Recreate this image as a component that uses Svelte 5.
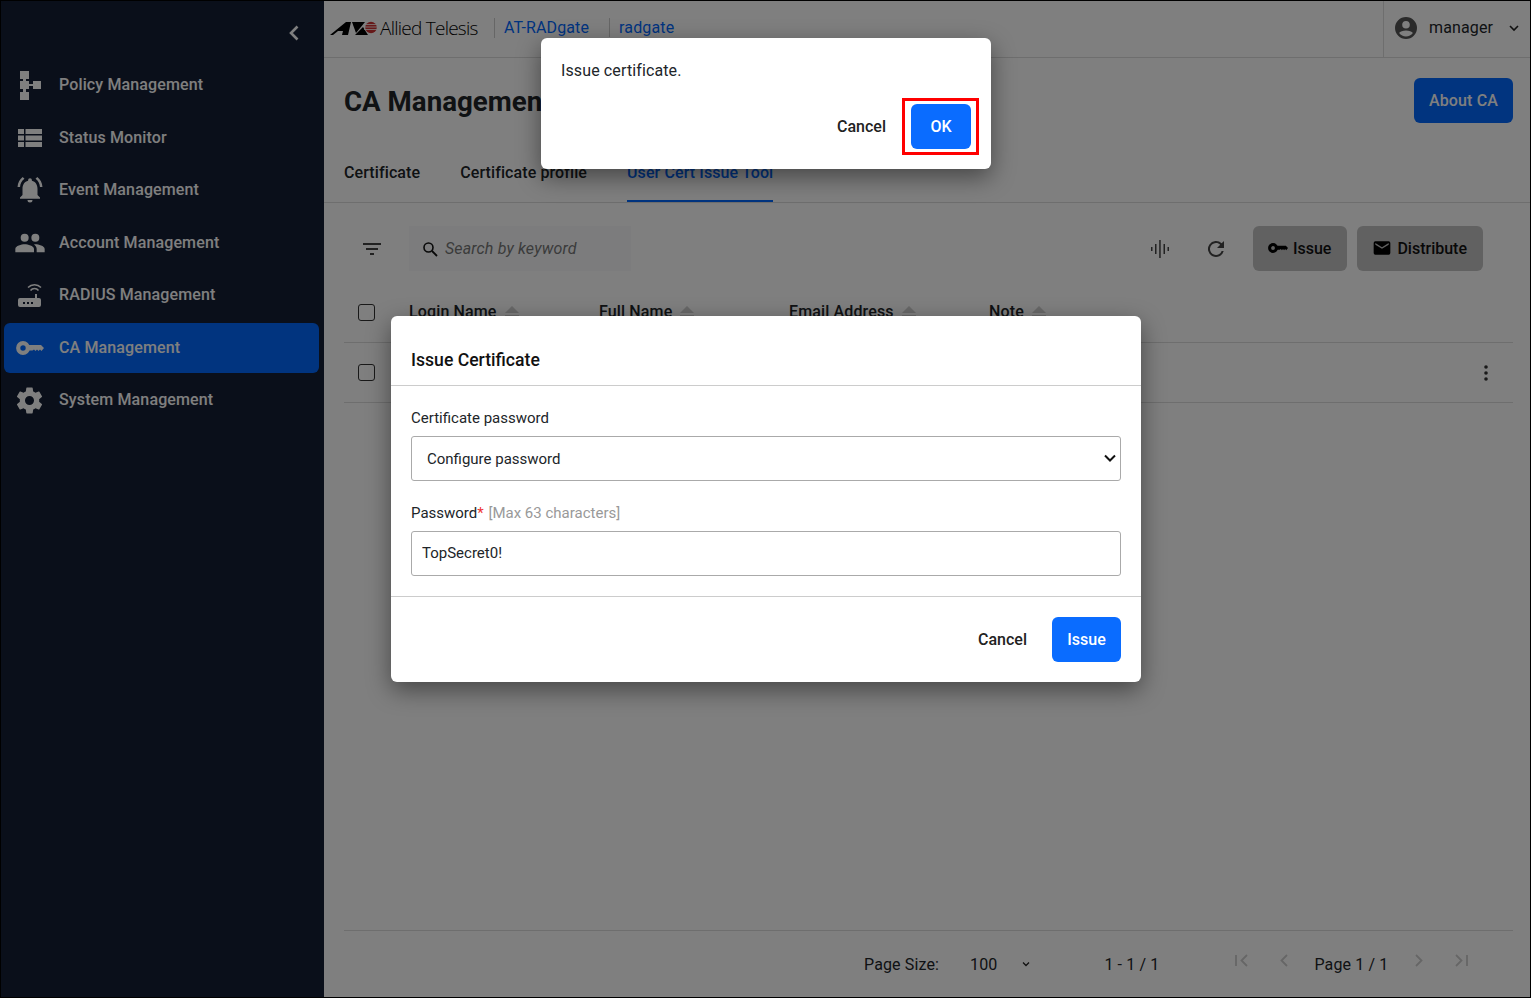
<script>
  const navItems = [
    { label: 'Policy Management', icon: 'policy' },
    { label: 'Status Monitor', icon: 'status' },
    { label: 'Event Management', icon: 'event' },
    { label: 'Account Management', icon: 'account' },
    { label: 'RADIUS Management', icon: 'radius' },
    { label: 'CA Management', icon: 'key', active: true },
    { label: 'System Management', icon: 'gear' }
  ];

  const tabs = ['Certificate', 'Certificate profile', 'User Cert Issue Tool'];
  const columns = ['Login Name', 'Full Name', 'Email Address', 'Note'];

  const keyShaft = 'M12.500 5H25l3 3-2.500 3-1.500-1.500-1.500 1.500-1.500-1.500-1.500 1.500-1.500-1.500-1.500 1H12.500z';
</script>

<div class="app">
  <aside class="sidebar">
    <div class="collapse">
      <svg width="24" height="24" viewBox="0 0 24 24"><path d="M15.500 5.500 9 12l6.500 6.500" fill="none" stroke="#fff" stroke-width="2.600" /></svg>
    </div>
    <nav>
      {#each navItems as item}
        <div class="nav-item" class:active={item.active}>
          <span class="nav-icon">
            {#if item.icon === 'policy'}
              <svg width="24" height="30" viewBox="0 0 24 30" fill="#fff"><path d="M2 1h9v8H8v2h3v3h4v-3h8v8h-8v-3h-4v3H8v3h3v8H2v-8h3v-3H2V11h3V9H2z" /></svg>
            {:else if item.icon === 'status'}
              <svg width="24" height="18" viewBox="0 0 24 18" fill="#fff"><path d="M0 0h6v5H0zM7.500 0H24v5H7.500zM0 6.500h6v5H0zM7.500 6.500H24v5H7.500zM0 13h6v5H0zM7.500 13H24v5H7.500z" /></svg>
            {:else if item.icon === 'event'}
              <svg width="30" height="30" viewBox="0 0 24 24" fill="#fff"><path d="M12 22a2 2 0 0 0 2-2h-4a2 2 0 0 0 2 2zm6-6v-5c0-3.100-1.640-5.640-4.500-6.320V4a1.500 1.500 0 0 0-3 0v.68C7.630 5.360 6 7.890 6 11v5l-2 2v1h16v-1l-2-2zM7.580 3.080 6.150 1.650C3.750 3.480 2.170 6.300 2.030 9.500h2c.15-2.650 1.510-4.970 3.550-6.420zM19.970 9.500h2c-.15-3.200-1.730-6.020-4.120-7.850l-1.420 1.430c2.020 1.450 3.390 3.770 3.540 6.420z" /></svg>
            {:else if item.icon === 'account'}
              <svg width="32" height="32" viewBox="0 0 24 24" fill="#fff"><path d="M16 11a3 3 0 1 0 0-6 3 3 0 0 0 0 6zm-8 0a3 3 0 1 0 0-6 3 3 0 0 0 0 6zm0 2c-2.330 0-7 1.170-7 3.500V19h14v-2.500C15 14.170 10.330 13 8 13zm8 0c-.29 0-.62.02-.97.05 1.160.84 1.970 1.970 1.970 3.450V19h6v-2.500c0-2.330-4.670-3.500-7-3.500z" /></svg>
            {:else if item.icon === 'radius'}
              <svg width="26" height="26" viewBox="0 0 26 26"><path d="M3 16h15v-4h2v4h2a2 2 0 0 1 2 2v5a2 2 0 0 1-2 2H3a2 2 0 0 1-2-2v-5a2 2 0 0 1 2-2z" fill="#fff" /><path d="M6 20h2v2H6zM10 20h2v2h-2zM14 20h2v2h-2z" fill="#141e34" /><path d="M15.500 8.500a5 5 0 0 1 8 0M13 5.500a9 9 0 0 1 13 0" transform="translate(-2 0)" fill="none" stroke="#fff" stroke-width="1.500" /></svg>
            {:else if item.icon === 'key'}
              <svg class="key" width="28" height="16" viewBox="0 0 28 16"><circle cx="7" cy="8" r="4.800" fill="none" stroke="#fff" stroke-width="4.200" /><path d={keyShaft} fill="#fff" /></svg>
            {:else}
              <svg class="gear" width="31" height="31" viewBox="0 0 24 24" fill="#fff"><path d="M19.430 12.980c.04-.32.07-.64.07-.98s-.03-.66-.07-.98l2.110-1.650a.5.5 0 0 0 .12-.64l-2-3.460a.5.5 0 0 0-.61-.22l-2.490 1a7.300 7.300 0 0 0-1.690-.98l-.38-2.650A.49.49 0 0 0 14 2h-4a.49.49 0 0 0-.49.42l-.38 2.650c-.61.25-1.170.59-1.690.98l-2.490-1a.49.49 0 0 0-.61.22l-2 3.460a.49.49 0 0 0 .12.64l2.110 1.650c-.04.32-.07.65-.07.98s.03.66.07.98l-2.110 1.650a.5.5 0 0 0-.12.64l2 3.460c.12.22.39.3.61.22l2.490-1c.52.4 1.080.73 1.690.98l.38 2.650c.03.24.24.42.49.42h4c.25 0 .46-.18.49-.42l.38-2.650c.61-.25 1.170-.59 1.690-.98l2.490 1c.23.09.49 0 .61-.22l2-3.460a.5.5 0 0 0-.12-.64l-2.110-1.650zM12 15.500a3.500 3.500 0 1 1 0-7 3.500 3.500 0 0 1 0 7z" /></svg>
            {/if}
          </span>
          <span class="nav-label">{item.label}</span>
        </div>
      {/each}
    </nav>
  </aside>

  <div class="main">
    <header class="topbar">
      <div class="logo">
        <svg width="48" height="16" viewBox="0 0 48 16">
          <path d="M1 15 17 2h5l-3 13h-6l1-4H9l-5 4z" fill="#000" />
          <path d="M23 2h13L27 13z" fill="#000" />
          <path d="M26 15 34 7l5 8z" fill="#000" />
          <circle cx="42" cy="7.500" r="5.800" fill="#c33" />
          <path d="M35 4.500h13M35 7h13M35 9.500h13" stroke="#fff" stroke-width=".8" />
        </svg>
        <span class="logo-text">Allied Telesis</span>
      </div>
      <a class="crumb first" href="#top">AT-RADgate</a>
      <a class="crumb" href="#top">radgate</a>
      <div class="user">
        <svg width="24" height="24" viewBox="0 0 24 24" fill="#555"><path d="M12 1a11 11 0 1 0 0 22 11 11 0 0 0 0-22zm0 4a3.800 3.800 0 1 1 0 7.600A3.800 3.800 0 0 1 12 5zm0 15.600a8.700 8.700 0 0 1-6.900-3.500c.8-1.700 4.100-2.700 6.900-2.700s6.100 1 6.900 2.700a8.700 8.700 0 0 1-6.900 3.500z" /></svg>
        <span>manager</span>
        <svg class="chev" width="12" height="12" viewBox="0 0 12 12"><path d="m2 4 4 4 4-4" fill="none" stroke="#222" stroke-width="1.600" /></svg>
      </div>
    </header>

    <div class="title-row">
      <h1>CA Management</h1>
      <button class="about">About CA</button>
    </div>

    <div class="tabs">
      {#each tabs as tab, i}
        <div class="tab" class:selected={i === 2}>{tab}</div>
      {/each}
    </div>

    <div class="toolbar">
      <svg class="filter" width="24" height="24" viewBox="0 0 24 24" fill="#444"><path d="M3 6h18v2H3zM6 11h12v2H6zM10 16h4v2h-4z" /></svg>
      <div class="search">
        <svg width="18" height="18" viewBox="0 0 18 18"><circle cx="7.500" cy="7.500" r="4.500" fill="none" stroke="#111" stroke-width="1.600" /><path d="m11 11 5 5" stroke="#111" stroke-width="1.800" /></svg>
        <span>Search by keyword</span>
      </div>
      <div class="spacer"></div>
      <svg class="wave" width="20" height="20" viewBox="0 0 20 20" fill="#444"><path d="M1 8h1.500v4H1zM5 5h1.500v10H5zM9.200 1h1.500v18H9.200zM13.500 5H15v10h-1.500zM17.500 8H19v4h-1.500z" /></svg>
      <svg class="refresh" width="24" height="24" viewBox="0 0 24 24" fill="#444"><path d="M17.650 6.350A8 8 0 1 0 19.730 14h-2.080A6 6 0 1 1 12 6c1.660 0 3.140.69 4.220 1.780L13 11h7V4l-2.350 2.350z" /></svg>
      <button class="tool first-tool">
        <svg width="20" height="12" viewBox="0 0 28 16"><circle cx="7" cy="8" r="4.800" fill="none" stroke="#000" stroke-width="4.200" /><path d={keyShaft} fill="#000" /></svg>
        Issue
      </button>
      <button class="tool">
        <svg width="20" height="20" viewBox="0 0 24 24" fill="#000"><path d="M20 4H4a2 2 0 0 0-2 2v12a2 2 0 0 0 2 2h16a2 2 0 0 0 2-2V6a2 2 0 0 0-2-2zm0 4-8 5-8-5V6l8 5 8-5v2z" /></svg>
        Distribute
      </button>
    </div>

    <div class="table">
      <div class="row head">
        <span class="check"></span>
        {#each columns as col}
          <div class="col">
            {col}
            <svg width="14" height="12" viewBox="0 0 14 12"><path d="M7 0 14 7H0z" fill="#d0d0d0" /><path d="M0 9h14v1.500H0z" fill="#d0d0d0" /></svg>
          </div>
        {/each}
      </div>
      <div class="row body">
        <span class="check"></span>
        <svg class="kebab" width="4" height="16" viewBox="0 0 4 16" fill="#333"><circle cx="2" cy="2" r="1.800" /><circle cx="2" cy="8" r="1.800" /><circle cx="2" cy="14" r="1.800" /></svg>
      </div>
    </div>

    <footer class="pager">
      <span>Page Size:</span>
      <span class="size">100</span>
      <svg class="size-chev" width="10" height="10" viewBox="0 0 10 10"><path d="m2 3.500 3 3 3-3" fill="none" stroke="#222" stroke-width="1.300" /></svg>
      <span class="range">1 - 1 / 1</span>
      <div class="page-nav">
        <svg width="16" height="16" viewBox="0 0 16 16"><path d="M2 2v11M13 2 7.500 7.500 13 13" fill="none" stroke="#ccc" stroke-width="1.800" /></svg>
        <svg class="prev" width="16" height="16" viewBox="0 0 16 16"><path d="M11 2 5.500 7.500 11 13" fill="none" stroke="#ccc" stroke-width="1.800" /></svg>
        <span class="page-label">Page 1 / 1</span>
        <svg width="16" height="16" viewBox="0 0 16 16"><path d="M5 2l5.500 5.500L5 13" fill="none" stroke="#ccc" stroke-width="1.800" /></svg>
        <svg class="last" width="16" height="16" viewBox="0 0 16 16"><path d="M3 2l5.500 5.500L3 13M14 2v11" fill="none" stroke="#ccc" stroke-width="1.800" /></svg>
      </div>
    </footer>
  </div>

  <div class="overlay"></div>

  <section class="dialog issue-dialog">
    <h2>Issue Certificate</h2>
    <div class="dialog-body">
      <label for="cert-pass">Certificate password</label>
      <div class="select-wrap">
        <select id="cert-pass">
          <option>Configure password</option>
        </select>
        <svg width="14" height="8" viewBox="0 0 14 8"><path d="m2 1.500 5 5 5-5" fill="none" stroke="#111" stroke-width="2" /></svg>
      </div>
      <label class="pass-label" for="pass">Password<span class="req">*</span> <span class="hint">[Max 63 characters]</span></label>
      <input id="pass" value="TopSecret0!" />
    </div>
    <div class="dialog-actions">
      <button class="plain">Cancel</button>
      <button class="primary">Issue</button>
    </div>
  </section>

  <section class="dialog confirm-dialog">
    <p>Issue certificate.</p>
    <div class="confirm-actions">
      <button class="plain">Cancel</button>
      <span class="highlight"><button class="primary ok">OK</button></span>
    </div>
  </section>
</div>

<style>
  :global(body) {
    margin: 0;
    font-family: Roboto, "Liberation Sans", sans-serif;
    color: #212529;
    background: #fff;
  }

  .app {
    position: relative;
    display: flex;
    width: 1531px;
    height: 998px;
    box-sizing: border-box;
    border: 1px solid #000;
    overflow: hidden;
    background: #fff;
    letter-spacing: 0.13px;
  }

  .sidebar {
    flex: 0 0 323px;
    background: #141e34;
    color: #fff;
  }

  .collapse {
    display: flex;
    justify-content: flex-end;
    height: 24px;
    padding: 20px 18px 0 0;
  }

  nav {
    padding: 15px 5px 0 3px;
  }

  .nav-item {
    display: flex;
    align-items: center;
    height: 50px;
    margin-bottom: 2.500px;
    border-radius: 6px;
    font-size: 16px;
    font-weight: 500;
  }

  .nav-item.active {
    background: #0268ff;
  }

  .nav-label {
    margin-bottom: 1px;
  }

  .nav-icon {
    display: flex;
    flex: 0 0 55px;
    box-sizing: border-box;
    padding-right: 3px;
    align-items: center;
    justify-content: center;
  }

  .key,
  .gear {
    margin-left: -1px;
  }

  .main {
    display: flex;
    flex: 1;
    flex-direction: column;
    min-width: 0;
  }

  .topbar {
    display: flex;
    flex: 0 0 57px;
    align-items: center;
    box-sizing: border-box;
    padding: 0 0 3px 5px;
    border-bottom: 1px solid #ddd;
  }

  .logo {
    display: flex;
    align-items: center;
    gap: 3px;
    width: 165px;
    height: 20px;
    border-right: 1px solid #ccc;
  }

  .logo-text {
    font-family: "Open Sans", sans-serif;
    font-size: 19px;
    font-weight: 300;
    letter-spacing: -0.75px;
    color: #000;
  }

  .crumb {
    font-size: 16px;
    color: #0268ff;
    text-decoration: none;
  }

  .crumb.first {
    margin-left: 9px;
    padding-right: 20px;
    border-right: 1px solid #ccc;
  }

  .crumb + .crumb {
    margin-left: 9px;
  }

  .user {
    display: flex;
    align-items: center;
    align-self: stretch;
    margin: 0 0 -3px auto;
    width: 147px;
    box-sizing: border-box;
    padding: 0 0 3px 10px;
    border-left: 1px solid #ddd;
    font-size: 16px;
  }

  .user span {
    margin-left: 11px;
  }

  .user .chev {
    margin-left: 15px;
  }

  .title-row {
    display: flex;
    flex: 0 0 65px;
    align-items: center;
    justify-content: space-between;
    padding: 10px 17px 0 20px;
  }

  h1 {
    margin: 1px 0 0;
    font-size: 27.700px;
    font-weight: 700;
    letter-spacing: 0;
    white-space: nowrap;
  }

  button {
    border: 0;
    font-family: inherit;
    font-size: 16px;
    font-weight: 500;
    letter-spacing: inherit;
    cursor: pointer;
  }

  .about {
    width: 99px;
    height: 45px;
    border-radius: 6px;
    background: #0268ff;
    color: #fff;
  }

  .tabs {
    display: flex;
    flex: 0 0 46px;
    gap: 40px;
    margin-top: 24px;
    padding-left: 20px;
    border-bottom: 1px solid #ddd;
    box-sizing: border-box;
    letter-spacing: 0.1px;
  }

  .tab {
    box-sizing: border-box;
    height: 45px;
    padding-top: 5px;
    font-size: 16px;
    font-weight: 500;
    line-height: 22px;
  }

  .tab.selected {
    color: #0268ff;
    border-bottom: 2px solid #0268ff;
  }

  .toolbar {
    display: flex;
    align-items: center;
    flex: 0 0 45px;
    margin-top: 23px;
    padding: 0 47px 0 36px;
  }

  .search {
    display: flex;
    align-items: center;
    gap: 7px;
    width: 222px;
    height: 45px;
    box-sizing: border-box;
    margin-left: 25px;
    padding-left: 12px;
    background: #f8f9fb;
    font-size: 16px;
    font-style: italic;
    color: #777;
  }

  .search span {
    margin-left: -1px;
    letter-spacing: 0.15px;
  }

  .spacer {
    flex: 1;
  }

  .refresh {
    margin-left: 34px;
  }

  .tool {
    display: flex;
    align-items: center;
    gap: 5px;
    height: 45px;
    padding: 0 16px 1px 15px;
    border-radius: 6px;
    background: #c3c3c3;
    color: #111;
    letter-spacing: 0;
  }

  .tool.first-tool {
    margin-left: 25px;
    margin-right: 10px;
  }

  .table {
    flex: 0 0 auto;
    margin: 10px 17px 0 20px;
  }

  .row {
    display: flex;
    align-items: center;
    border-bottom: 1px solid #ddd;
    box-sizing: border-box;
    position: relative;
  }

  .head {
    height: 62px;
  }

  .body {
    height: 60px;
  }

  .check {
    flex: 0 0 auto;
    width: 15px;
    height: 15px;
    margin-left: 14px;
    border: 1px solid #333;
    border-radius: 3px;
  }

  .head .check {
    margin-right: 34px;
    margin-top: 2px;
  }

  .col {
    display: flex;
    align-items: center;
    gap: 8px;
    width: 190px;
    font-size: 16px;
    font-weight: 500;
  }

  .col:last-child {
    width: auto;
  }

  .col:nth-child(4) {
    width: 200px;
  }

  .kebab {
    margin-left: auto;
    margin-right: 25px;
  }

  .pager {
    display: flex;
    align-items: center;
    height: 66px;
    margin: auto 17px 0 20px;
    padding-left: 520px;
    border-top: 1px solid #ddd;
    font-size: 16px;
  }

  .size {
    margin-left: 31px;
  }

  .size-chev {
    margin-left: 24px;
  }

  .range {
    margin-left: 73px;
  }

  .page-nav {
    display: flex;
    align-items: center;
    margin-left: 75px;
  }

  .page-nav svg {
    margin-top: -6px;
  }

  .prev {
    margin-left: 26px;
  }

  .page-label {
    margin: 0 23px 0 22px;
  }

  .last {
    margin-left: 26px;
  }

  .overlay {
    position: absolute;
    inset: 0;
    background: rgba(0, 0, 0, 0.5);
  }

  .dialog {
    position: absolute;
    background: #fff;
    border-radius: 6px;
    box-shadow: 0 8px 24px rgba(0, 0, 0, 0.45);
    letter-spacing: 0;
  }

  .issue-dialog {
    left: 390px;
    top: 315px;
    width: 750px;
    height: 366px;
  }

  h2 {
    margin: 0;
    height: 70px;
    box-sizing: border-box;
    padding: 32px 20px 0;
    border-bottom: 1px solid #ccc;
    font-size: 17.600px;
    font-weight: 500;
    line-height: 24px;
    color: #111;
  }

  .dialog-body {
    display: flex;
    flex-direction: column;
    height: 211px;
    box-sizing: border-box;
    padding: 22px 20px 0;
    border-bottom: 1px solid #ccc;
  }

  label {
    font-size: 15px;
    line-height: 20px;
  }

  .select-wrap {
    position: relative;
  }

  .select-wrap svg {
    position: absolute;
    right: 4px;
    top: 26px;
  }

  select,
  input {
    display: block;
    width: 100%;
    height: 45px;
    box-sizing: border-box;
    margin-top: 8px;
    border: 1px solid #aaa;
    border-radius: 3px;
    background: #fff;
    font-family: inherit;
    font-size: 15px;
    color: #212529;
  }

  select {
    appearance: none;
    padding-left: 15px;
  }

  input {
    padding: 0 0 2px 10px;
  }

  .pass-label {
    margin-top: 22px;
  }

  .pass-label + input {
    margin-top: 8px;
  }

  .req {
    color: #e33;
  }

  .hint {
    margin-left: 1px;
    color: #999;
  }

  .dialog-actions {
    display: flex;
    align-items: center;
    justify-content: flex-end;
    height: 85px;
    padding-right: 20px;
  }

  .plain {
    background: none;
    color: #222;
    padding: 0;
  }

  .primary {
    width: 69px;
    height: 45px;
    margin-left: 25px;
    border-radius: 6px;
    background: #0a6cff;
    color: #fff;
  }

  .confirm-dialog {
    left: 540px;
    top: 37px;
    width: 450px;
    height: 131px;
  }

  .confirm-dialog p {
    margin: 0;
    padding: 23px 20px 0;
    font-size: 16px;
    line-height: 20px;
    letter-spacing: 0.12px;
  }

  .confirm-actions {
    display: flex;
    align-items: center;
    justify-content: flex-end;
    margin-top: 17px;
    padding-right: 12px;
  }

  .highlight {
    display: flex;
    margin-left: 16px;
    padding: 3px 5px 3px 6px;
    border: 3px solid #f00;
  }

  .ok {
    width: 60px;
    margin-left: 0;
  }
</style>
